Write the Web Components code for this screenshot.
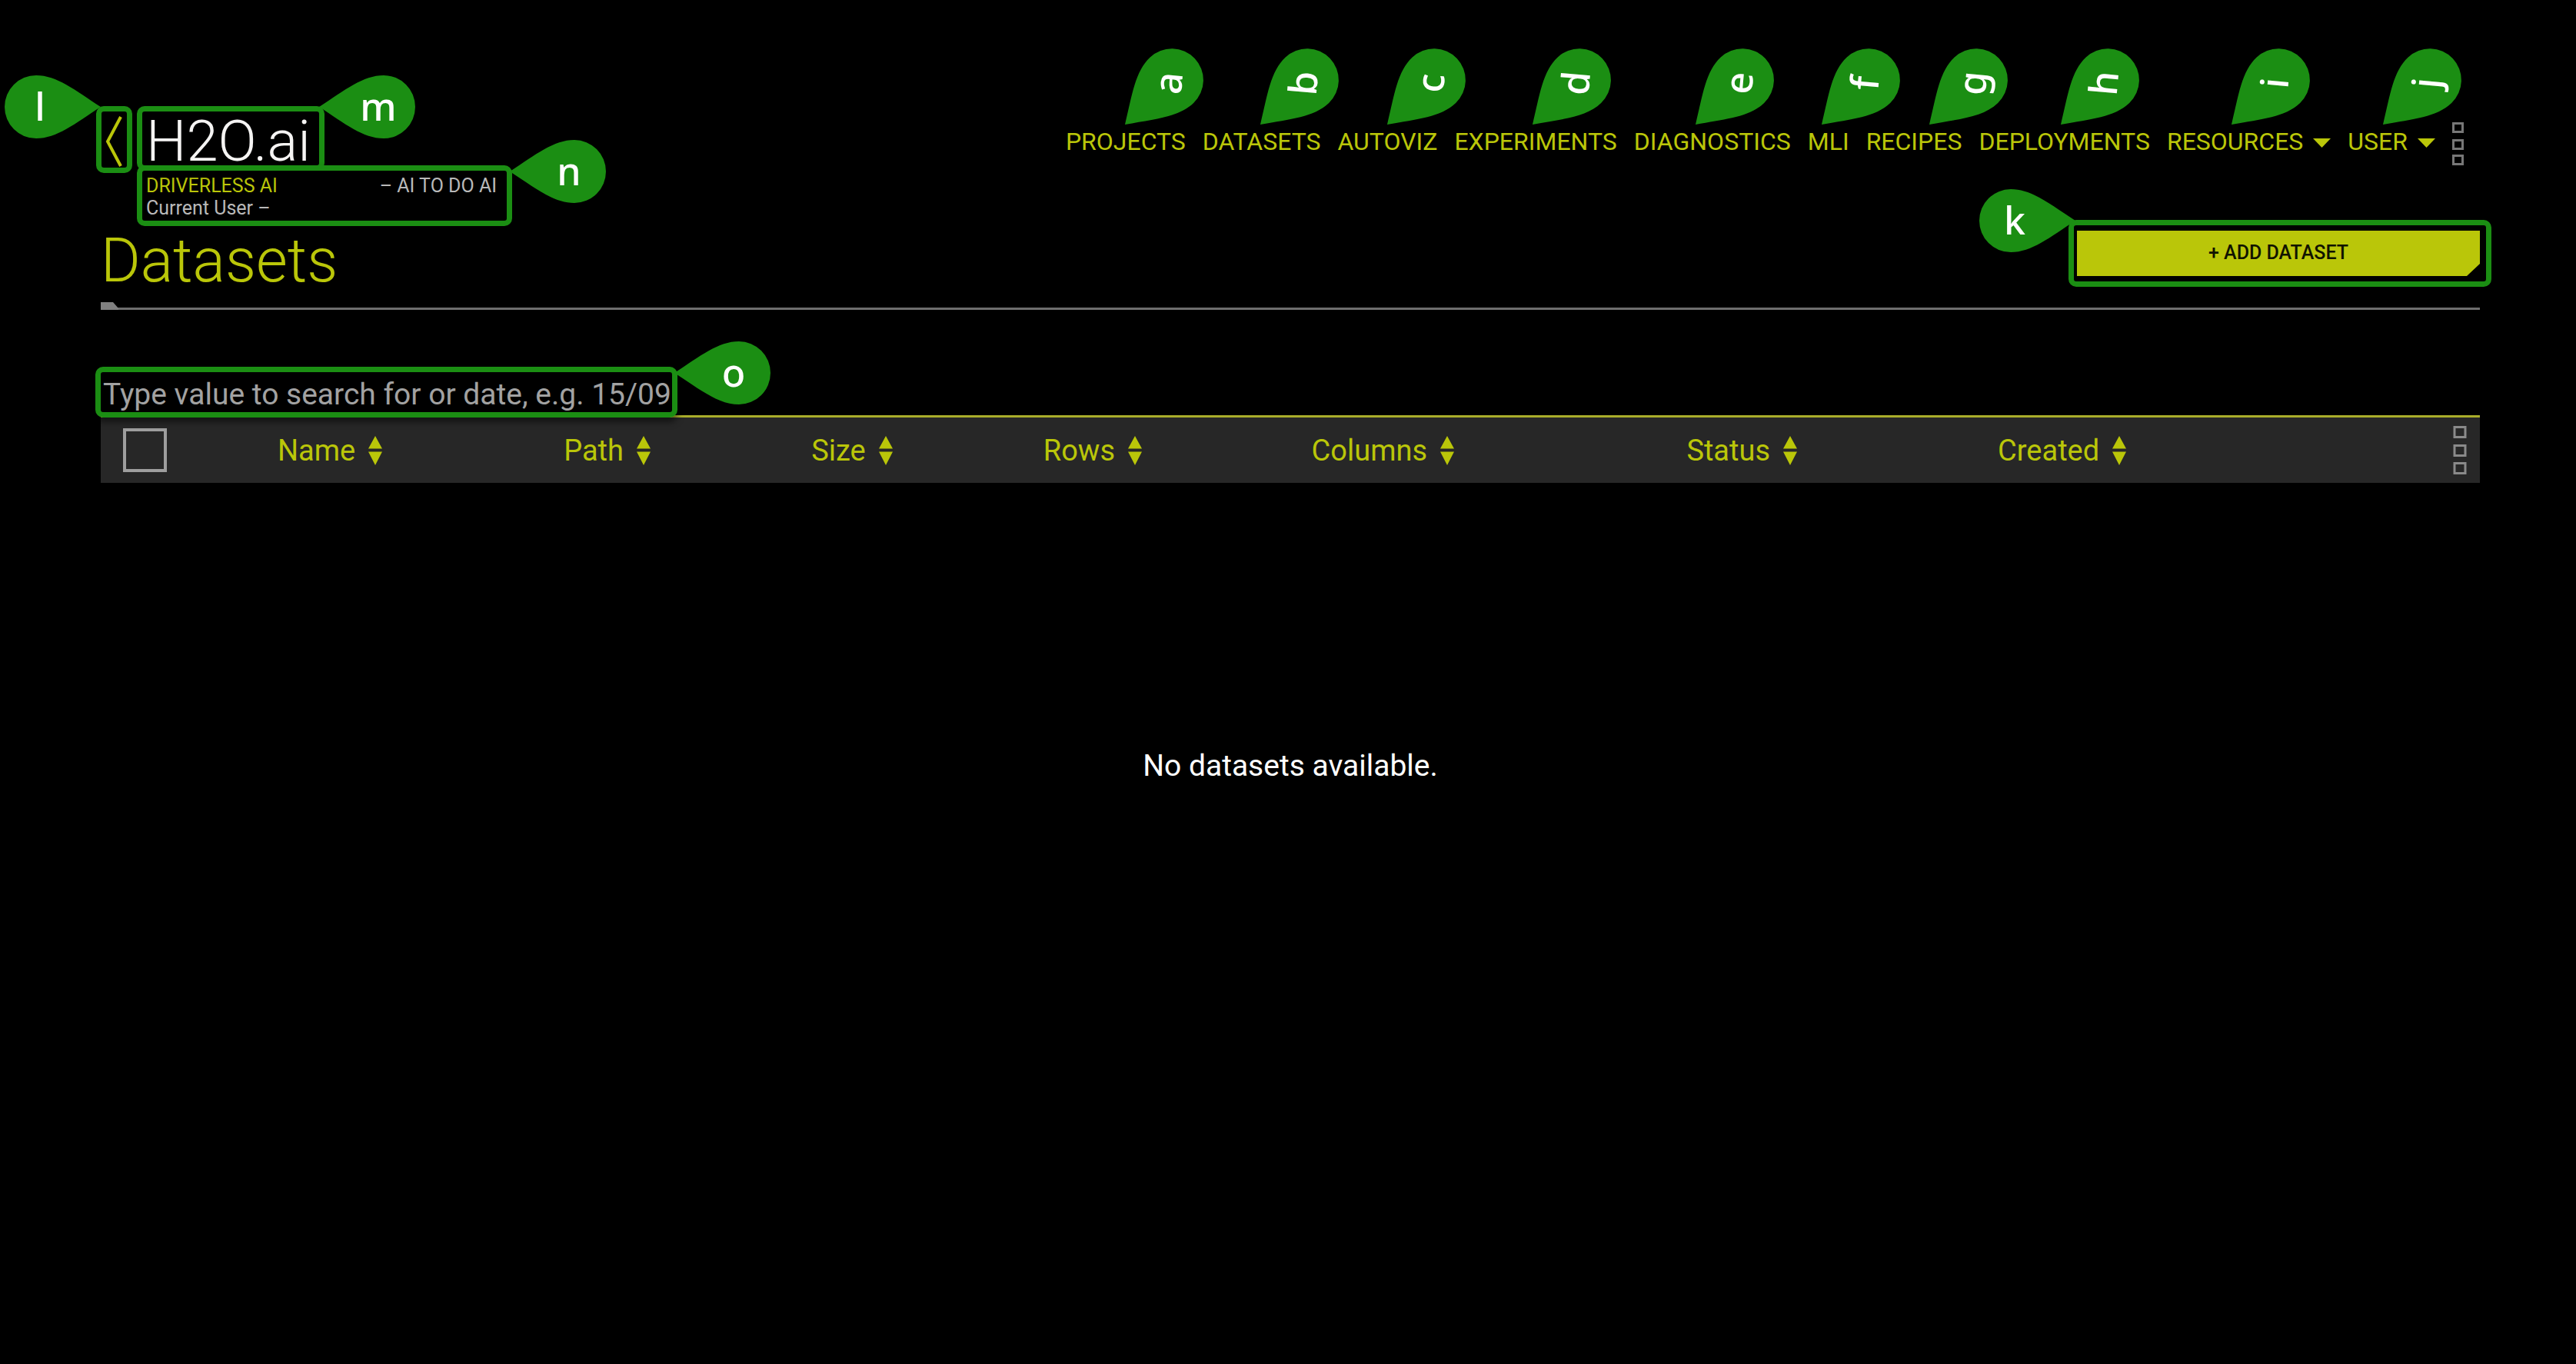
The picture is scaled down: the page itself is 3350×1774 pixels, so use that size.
<!DOCTYPE html>
<html lang="en">
<head>
<meta charset="utf-8">
<title>Datasets</title>
<style>
  html { background: #000; }
  body {
    margin: 0;
    --lime: #bac609;
    --green: #1b8e13;
    --grey: #b9b9b9;
    font-family: Roboto, "Liberation Sans", sans-serif;
    color: #fff;
  }
</style>
</head>
<body>
<datasets-page></datasets-page>

<script>
const define = (name, markup, setup) => {
  const template = document.createElement('template');
  template.innerHTML = markup;
  customElements.define(name, class extends HTMLElement {
    connectedCallback() {
      if (this.shadowRoot) return;
      const root = this.attachShadow({ mode: 'open' });
      root.append(template.content.cloneNode(true));
      if (setup) setup(this, root);
    }
  });
};

/* Logo, product line and current user, with the back link before them */
define('brand-block', `
  <style>
    :host { display: flex; gap: 25px; }
    .back { width: 34px; height: 72px; display: flex; justify-content: center; padding-top: 3px; box-sizing: border-box; }
    .name { font-size: 74px; line-height: 72px; font-weight: 300; color: #f5f4f3; }
    .info { margin-top: 7px; width: 456px; font-size: 25px; line-height: 29px; color: var(--grey); }
    .row { display: flex; justify-content: space-between; }
    .product { color: var(--lime); }
  </style>
  <a class="back" href="#back" aria-label="Back">
    <svg width="22" height="66" viewBox="0 0 22 66" fill="none" stroke="#bac609" stroke-width="4"><path d="M20 1 3 33 20 65"/></svg>
  </a>
  <div>
    <div class="name"><slot name="name"></slot></div>
    <div class="info">
      <div class="row"><span class="product"><slot name="product"></slot></span><span><slot name="motto"></slot></span></div>
      <div><slot name="user"></slot></div>
    </div>
  </div>
`);

define('nav-item', `
  <style>
    :host { display: block; }
    a, button {
      display: flex; align-items: center; gap: 13px;
      font: 400 32px/38px Roboto, "Liberation Sans", sans-serif;
      color: var(--lime); text-decoration: none; white-space: nowrap;
      background: none; border: 0; padding: 0; margin: 0;
    }
    svg { display: block; margin-top: 3px; }
  </style>
`, (host, root) => {
  if (host.hasAttribute('menu')) {
    root.innerHTML += `<button type="button"><slot></slot><svg width="23" height="12" viewBox="0 0 23 12" fill="#bac609"><path d="M0 0h23L11.500 12z"/></svg></button>`;
  } else {
    root.innerHTML += `<a href="#"><slot></slot></a>`;
  }
});

define('sort-button', `
  <style>
    :host { display: inline-block; }
    button {
      display: flex; align-items: center; gap: 17px;
      font: 400 38px/46px Roboto, "Liberation Sans", sans-serif;
      color: var(--lime); background: none; border: 0; padding: 0;
    }
    svg { display: block; }
  </style>
  <button type="button"><slot></slot>
    <svg width="18" height="38" viewBox="0 0 18 38" fill="#bac609"><path d="M9 0 18 16.500H0zM9 38 0 20.500H18z"/></svg>
  </button>
`);

define('page-title', `
  <style>
    :host { display: block; }
    .bar { display: flex; justify-content: space-between; align-items: flex-start; margin-top: 15px; }
    h1 { margin: 0; font-size: 79px; line-height: 78px; font-weight: 300; color: var(--lime); }
    .rule { margin-top: 15px; height: 10px; box-sizing: border-box; border-bottom: 3px solid #6e6e6e; }
    .rule svg { display: block; }
  </style>
  <div class="bar"><h1><slot></slot></h1><slot name="action"></slot></div>
  <div class="rule"><svg width="24" height="10" viewBox="0 0 24 10" fill="#808080"><path d="M0 0H16L23 8V10H0z"/></svg></div>
`);

define('action-button', `
  <style>
    :host { display: block; width: 524px; }
    button {
      display: block; width: 100%; height: 59px; border: 0; padding: 0 0 2px;
      font: 500 25px/28px Roboto, "Liberation Sans", sans-serif;
      color: #111300; background: var(--lime);
      clip-path: polygon(0 0, 100% 0, 100% calc(100% - 16px), calc(100% - 17px) 100%, 0 100%);
    }
  </style>
  <button type="button"><slot></slot></button>
`);

define('dataset-table', `
  <style>
    :host { display: block; margin-top: 87px; }
    input[type=search] {
      display: block; width: 100%; height: 53px; box-sizing: border-box; appearance: none;
      border: 0; border-bottom: 3px solid #a9ad2b; border-radius: 0; outline: 0;
      padding: 0 0 4px 3px; background: transparent; color: #fff;
      font: 400 39px/46px Roboto, "Liberation Sans", sans-serif;
    }
    input::placeholder { color: #a2a2a2; opacity: 1; }
    table { width: 100%; border-collapse: collapse; table-layout: fixed; }
    th { height: 85px; padding: 0; background: #272727; text-align: center; vertical-align: middle; }
    .check { width: 57px; height: 57px; margin: 0; appearance: none; border: 4px solid #9e9e9e; display: block; margin-left: 29px; }
    .more { display: block; margin-left: auto; margin-right: 17px; padding: 0; border: 0; background: none; }
    .more svg { display: block; }
    .empty { margin: 345px 0 0; text-align: center; font-size: 39px; line-height: 46px; }
  </style>
  <input type="search" aria-label="Search datasets" placeholder="Type value to search for or date, e.g. 15/09">
  <table>
    <colgroup>
      <col style="width:3.72%"><col style="width:11.83%"><col style="width:11.47%"><col style="width:9.11%"><col style="width:11.12%"><col style="width:13.28%"><col style="width:16.9%"><col style="width:10.02%"><col>
    </colgroup>
    <thead><tr>
      <th><input class="check" type="checkbox" aria-label="Select all"></th>
      <th scope="col"><sort-button>Name</sort-button></th>
      <th scope="col"><sort-button>Path</sort-button></th>
      <th scope="col"><sort-button>Size</sort-button></th>
      <th scope="col"><sort-button>Rows</sort-button></th>
      <th scope="col"><sort-button>Columns</sort-button></th>
      <th scope="col"><sort-button>Status</sort-button></th>
      <th scope="col"><sort-button>Created</sort-button></th>
      <th><button class="more" type="button" aria-label="Columns menu">
        <svg width="18" height="64" viewBox="0 0 18 64" fill="none" stroke="#8a8a8a" stroke-width="3"><path d="M2 1.500h14v13H2zM2 25.500h14v13H2zM2 48.500h14v13H2z"/></svg>
      </button></th>
    </tr></thead>
  </table>
  <p class="empty"><slot></slot></p>
`);

/* Teardrop marker; the host sits on the point of the drop */
define('callout-pin', `
  <style>
    :host { position: absolute; width: 0; height: 0; }
    svg { display: block; overflow: visible; }
    path { fill: var(--green); }
    text { fill: #fff; font: 500 50px "Noto Sans", sans-serif; text-anchor: middle; }
  </style>
`, (host, root) => {
  const point = host.getAttribute('point');
  const turn = { left: 0, right: 180, corner: -43.5 }[point];
  const place = {
    left: 'translate(77 18)',
    right: 'translate(-79 18)',
    corner: 'translate(56 -54) rotate(-85) translate(0 18)'
  }[point];
  root.innerHTML += `<svg width="1" height="1">
    <path transform="rotate(${turn})" d="M0 0C34 -22 57 -41 84 -41A41 41 0 0 1 84 41C57 41 34 22 0 0z"/>
    <text transform="${place}">${host.getAttribute('letter')}</text></svg>`;
});

define('callout-frame', `
  <style>
    :host {
      position: absolute; box-sizing: border-box; border: 7px solid var(--green);
      border-radius: 10px; box-shadow: 0 6px 8px rgba(0, 0, 0, .5);
    }
  </style>
`);

define('datasets-page', `
  <style>
    :host { display: block; position: relative; padding: 148px 125px 0 131px; }
    header { display: flex; justify-content: space-between; align-items: flex-start; }
    nav { display: flex; align-items: flex-start; gap: 22px; margin-top: 17px; padding-right: 21px; }
    .more { display: block; padding: 0; border: 0; background: none; margin-top: -6px; }
    .more svg { display: block; }
    callout-pin, callout-frame { z-index: 1; }
  </style>
  <header>
    <brand-block>
      <span slot="name">H2O.ai</span>
      <span slot="product">DRIVERLESS AI</span>
      <span slot="motto">– AI TO DO AI</span>
      <span slot="user">Current User –</span>
    </brand-block>
    <nav>
      <nav-item>PROJECTS</nav-item>
      <nav-item>DATASETS</nav-item>
      <nav-item>AUTOVIZ</nav-item>
      <nav-item>EXPERIMENTS</nav-item>
      <nav-item>DIAGNOSTICS</nav-item>
      <nav-item>MLI</nav-item>
      <nav-item>RECIPES</nav-item>
      <nav-item>DEPLOYMENTS</nav-item>
      <nav-item menu>RESOURCES</nav-item>
      <nav-item menu>USER</nav-item>
      <button class="more" type="button" aria-label="More">
        <svg width="15" height="57" viewBox="0 0 15 57" fill="none" stroke="#777" stroke-width="3"><path d="M1.500 1.500h12v11h-12zM1.500 23.500h12v11h-12zM1.500 43.500h12v11h-12z"/></svg>
      </button>
    </nav>
  </header>
  <page-title>Datasets<action-button slot="action">+ ADD DATASET</action-button></page-title>
  <dataset-table>No datasets available.</dataset-table>

  <callout-frame style="left:125px;top:138px;width:47px;height:87px"></callout-frame>
  <callout-frame style="left:178px;top:138px;width:244px;height:84px"></callout-frame>
  <callout-frame style="left:178px;top:215px;width:488px;height:79px"></callout-frame>
  <callout-frame style="left:124px;top:477px;width:757px;height:66px"></callout-frame>
  <callout-frame style="right:110px;top:286px;width:550px;height:87px"></callout-frame>

  <callout-pin letter="a" point="corner" style="right:1887px;top:162px"></callout-pin>
  <callout-pin letter="b" point="corner" style="right:1711px;top:162px"></callout-pin>
  <callout-pin letter="c" point="corner" style="right:1546px;top:162px"></callout-pin>
  <callout-pin letter="d" point="corner" style="right:1357px;top:162px"></callout-pin>
  <callout-pin letter="e" point="corner" style="right:1145px;top:162px"></callout-pin>
  <callout-pin letter="f" point="corner" style="right:981px;top:162px"></callout-pin>
  <callout-pin letter="g" point="corner" style="right:841px;top:162px"></callout-pin>
  <callout-pin letter="h" point="corner" style="right:670px;top:162px"></callout-pin>
  <callout-pin letter="i" point="corner" style="right:448px;top:162px"></callout-pin>
  <callout-pin letter="j" point="corner" style="right:251px;top:162px"></callout-pin>
  <callout-pin letter="k" point="right" style="right:651px;top:287px"></callout-pin>
  <callout-pin letter="l" point="right" style="left:131px;top:139px"></callout-pin>
  <callout-pin letter="m" point="left" style="left:415px;top:139px"></callout-pin>
  <callout-pin letter="n" point="left" style="left:663px;top:223px"></callout-pin>
  <callout-pin letter="o" point="left" style="left:877px;top:485px"></callout-pin>
`);
</script>
</body>
</html>
